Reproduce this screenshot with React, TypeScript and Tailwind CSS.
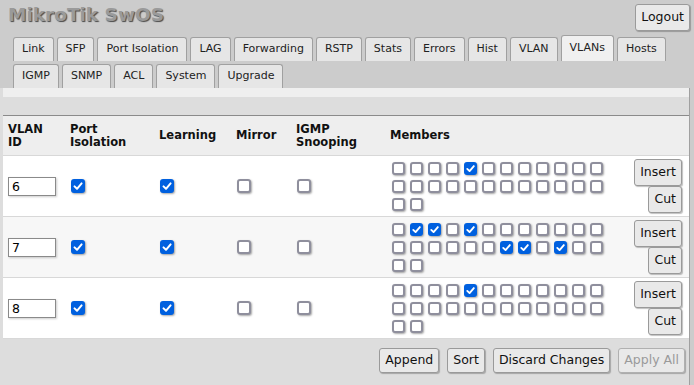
import React from 'react';

const FONT = { fontFamily: '"DejaVu Sans", Verdana, sans-serif' };

const tabsRow1 = ['Link', 'SFP', 'Port Isolation', 'LAG', 'Forwarding', 'RSTP', 'Stats', 'Errors', 'Hist', 'VLAN', 'VLANs', 'Hosts'];
const tabsRow2 = ['IGMP', 'SNMP', 'ACL', 'System', 'Upgrade'];

type Vlan = { id: string; members: number[] };

// members are 0-based port indexes
const vlans: Vlan[] = [
  { id: '6', members: [4] },
  { id: '7', members: [1, 2, 4, 18, 19, 21] },
  { id: '8', members: [4] },
];

const Check = ({ on, size = 'sm' }: { on: boolean; size?: 'sm' | 'md' }) => {
  const dim = size === 'md' ? 'w-[14px] h-[14px]' : 'w-[13px] h-[13px]';
  if (on) {
    return (
      <span className={`${dim} shrink-0 rounded-[3px] bg-[#0060df] flex items-center justify-center shadow-[1px_1px_2px_rgba(0,0,0,0.35)]`}>
        <svg viewBox="0 0 14 14" className="w-full h-full">
          <polyline points="3.5,7.4 6,9.8 10.6,4.4" fill="none" stroke="#fff" strokeWidth="2" strokeLinecap="round" strokeLinejoin="round" />
        </svg>
      </span>
    );
  }
  return <span className={`${dim} block shrink-0 rounded-[3px] border-2 border-[#8f8f9d] bg-white shadow-[1px_1px_2px_rgba(0,0,0,0.35)]`} />;
};

const Btn = ({ children, disabled = false, className = '' }: { children: React.ReactNode; disabled?: boolean; className?: string }) => (
  <button
    className={`flex items-center justify-center whitespace-nowrap px-[5px] text-[12.5px] rounded-[3px] border bg-[#e9e9e9] shadow-[1px_1px_1px_rgba(0,0,0,0.25)] ${
      disabled ? 'text-[#9a9a9a] border-[#b0b0b0]' : 'text-[#111] border-[#9a9a9a]'
    } ${className}`}
  >
    {children}
  </button>
);

const Tab = ({ label, active }: { label: string; active?: boolean }) => (
  <div
    className={`flex items-center px-2 text-[11px] text-[#222] border border-b-0 border-[#a0a0a0] rounded-t-[3px] whitespace-nowrap ${
      active ? 'bg-[#f0f0f0] -mt-[2px] h-[26px]' : 'bg-[#e6e6e6] h-[24px]'
    }`}
  >
    {label}
  </div>
);

const App: React.FC = () => {
  return (
    <div className="w-[694px] h-[385px] overflow-hidden bg-[#cccccc] pt-[4px]" style={FONT}>
      {/* Header */}
      <div className="flex items-start justify-between h-[27px] pr-[4px]">
        <div className="pl-[8px] text-[18.5px] leading-[22px] font-bold text-[#9a9a9a] [text-shadow:1px_1px_1px_#4a4a4a]">MikroTik SwOS</div>
        <Btn className="h-[27px]">Logout</Btn>
      </div>

      {/* Tabs */}
      <div className="flex items-end gap-[3px] pl-[13px] mt-[6px] h-[24px]">
        {tabsRow1.map((t) => (
          <Tab key={t} label={t} active={t === 'VLANs'} />
        ))}
      </div>
      <div className="flex items-end gap-[3px] pl-[13px] mt-[4px] h-[23px]">
        {tabsRow2.map((t) => (
          <Tab key={t} label={t} />
        ))}
      </div>

      {/* Panel */}
      <div className="w-[690px] h-[300px] bg-[#dddddd] border-r border-[#a0a0a0] pl-[3px] text-[#111]">
        <div className="h-[9px] bg-[#efefef]" />
        <div className="h-[19px] bg-[#dddddd] border-b border-[#8a8a8a]" />

        {/* Table header */}
        <div className="grid grid-cols-[62px_89px_77px_60px_94px_1fr] items-center h-[40px] bg-[#eeeeee] border-b border-[#d8d8d8] text-[11.5px] leading-[13px] font-bold">
          <div className="pl-[5px]">VLAN<br />ID</div>
          <div className="pl-[5px]">Port<br />Isolation</div>
          <div className="pl-[5px]">Learning</div>
          <div className="pl-[5px]">Mirror</div>
          <div className="pl-[5px]">IGMP<br />Snooping</div>
          <div className="pl-[5px]">Members</div>
        </div>

        {/* Rows */}
        {vlans.map((v, i) => (
          <div
            key={v.id}
            className={`grid grid-cols-[62px_89px_77px_60px_94px_1fr_auto] items-center py-[3px] border-b border-[#d8d8d8] ${
              i === 1 ? 'bg-[#f7f7f7]' : 'bg-white'
            }`}
          >
            <div className="pl-[5px]">
              <div className="w-[48px] h-[19px] border border-[#8a8a8a] bg-white text-[12.5px] leading-[17px] pl-[3px] text-black shadow-[1px_1px_2px_rgba(0,0,0,0.2)]">
                {v.id}
              </div>
            </div>
            <div className="pl-[6px]"><Check on size="md" /></div>
            <div className="pl-[6px]"><Check on size="md" /></div>
            <div className="pl-[6px]"><Check on={false} size="md" /></div>
            <div className="pl-[6px]"><Check on={false} size="md" /></div>
            <div className="pl-[7px]">
              <div className="flex flex-wrap w-[211px] gap-[5px]">
                {Array.from({ length: 26 }).map((_, p) => (
                  <Check key={p} on={v.members.includes(p)} />
                ))}
              </div>
            </div>
            <div className="flex flex-col items-end pr-[7px]">
              <Btn className="h-[27px]">Insert</Btn>
              <Btn className="h-[27px]">Cut</Btn>
            </div>
          </div>
        ))}

        {/* Footer buttons */}
        <div className="flex justify-end gap-2 pt-[9px] pr-[4px]">
          <Btn className="h-[25px]">Append</Btn>
          <Btn className="h-[25px]">Sort</Btn>
          <Btn className="h-[25px]">Discard Changes</Btn>
          <Btn className="h-[25px]" disabled>Apply All</Btn>
        </div>
      </div>
    </div>
  );
};

export default App;
